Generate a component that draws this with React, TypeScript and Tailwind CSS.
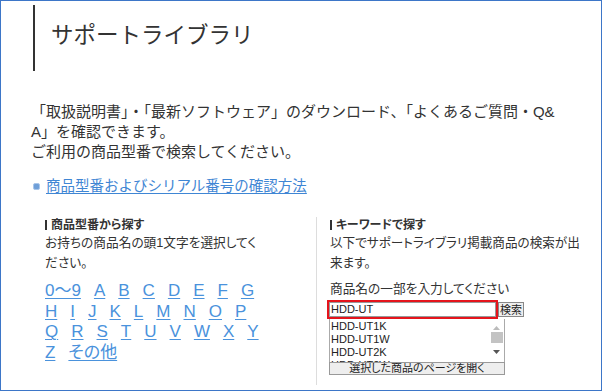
import React from "react"

const rows = [
  ["0〜9", "A", "B", "C", "D", "E", "F", "G"],
  ["H", "I", "J", "K", "L", "M", "N", "O", "P"],
  ["Q", "R", "S", "T", "U", "V", "W", "X", "Y"],
  ["Z", "その他"],
]

const items = ["HDD-UT1K", "HDD-UT1W", "HDD-UT2K", "HDD-UT2W"]

const Heading: React.FC<{ children: React.ReactNode }> = ({ children }) => (
  <div className="flex items-center gap-[4px] text-[12px] font-bold leading-[16px] text-[#333]">
    <span className="inline-block w-[2px] h-[10px] bg-[#333]" />
    <span>{children}</span>
  </div>
)

const App: React.FC = () => {
  return (
    <div
      className="w-[602px] h-[391px] border border-[#3d76c8] overflow-hidden bg-white text-[#333]"
      style={{ fontFamily: '"Liberation Sans", "Noto Sans CJK JP", sans-serif' }}
    >
      {/* タイトル */}
      <div className="ml-[32px] mt-[4px] h-[66px] border-l-[2px] border-[#333] pl-[16px] flex items-center">
        <h1 className="text-[22.5px] leading-[28px] font-normal mb-[5px]">サポートライブラリ</h1>
      </div>

      <p className="ml-[30px] mt-[31px] text-[15px] leading-[20px]">
        「取扱説明書」・「最新ソフトウェア」のダウンロード、「よくあるご質問・Q&amp;
        <br />
        A」を確認できます。
        <br />
        ご利用の商品型番で検索してください。
      </p>

      <div className="ml-[32px] mt-[14px] flex items-center gap-[6px] text-[14.5px] leading-[21px]">
        <span className="inline-block w-[7px] h-[7px] rounded-[2px] bg-[#6f9fd8] border border-[#a9c6ea]" />
        <a className="text-[#3f86d4] underline underline-offset-2">商品型番およびシリアル番号の確認方法</a>
      </div>

      <div className="flex mt-[20px] ml-[44px] [font-feature-settings:'palt']">
        {/* 商品型番から探す */}
        <div className="w-[271px]">
          <Heading>商品型番から探す</Heading>
          <p className="text-[12.7px] leading-[20px]">
            お持ちの商品名の頭1文字を選択してく
            <br />
            ださい。
          </p>
          <div className="mt-[8px] text-[17px] leading-[20.7px]">
            {rows.map((row, i) => (
              <div key={i} className="flex gap-[13px]">
                {row.map((ch) => (
                  <a key={ch} className="text-[#4a92dc] underline underline-offset-2 decoration-1">
                    {ch}
                  </a>
                ))}
              </div>
            ))}
          </div>
        </div>

        {/* キーワードで探す */}
        <div className="border-l border-[#ddd] pl-[13px] h-[168px]">
          <Heading>キーワードで探す</Heading>
          <p className="text-[12.6px] leading-[20px]">
            以下でサポートライブラリ掲載商品の検索が出
            <br />
            来ます。
          </p>
          <p className="mt-[6px] text-[12.7px] leading-[20px]">商品名の一部を入力してください</p>

          <div className="flex items-start mt-[1px] -ml-[3px]">
            <div className="border-2 border-[#e5141c] w-[171px] h-[19px]">
              <div className="border border-[#999] h-full bg-white text-[11px] leading-[13px] pl-[1px] text-[#222]">
                HDD-UT
              </div>
            </div>
            <button className="mt-[2px] h-[15px] px-[1px] border border-[#888] bg-[#eee] text-[11px] leading-[12px] text-[#222]">
              検索
            </button>
          </div>

          <div className="w-[176px] -ml-[1px]">
            <div className="h-[44px] border border-[#aaa] border-t-0 bg-white flex overflow-hidden">
              <div className="flex-1 pl-[1px] pt-[1px] text-[11px] leading-[13px] text-[#222]">
                {items.map((it) => (
                  <div key={it}>{it}</div>
                ))}
              </div>
              <div className="w-[13px] mr-[1px] flex flex-col items-center pt-[7px]">
                <svg width="7" height="4" viewBox="0 0 7 4">
                  <path d="M0 4 L3.5 0 L7 4 Z" fill="#bbb" />
                </svg>
                <div className="mt-[2px] w-[12px] h-[11px] bg-[#c3c3c3]" />
                <svg className="mt-[7px]" width="7" height="4" viewBox="0 0 7 4">
                  <path d="M0 0 L3.5 4 L7 0 Z" fill="#555" />
                </svg>
              </div>
            </div>
            <button className="w-full h-[13px] -mt-[1px] border border-[#999] bg-[#eee] overflow-hidden flex items-end justify-center text-[11px] leading-[13px] text-[#222]">
              <span className="translate-y-[1px]">選択した商品のページを開く</span>
            </button>
          </div>
        </div>
      </div>
    </div>
  )
}

export default App
